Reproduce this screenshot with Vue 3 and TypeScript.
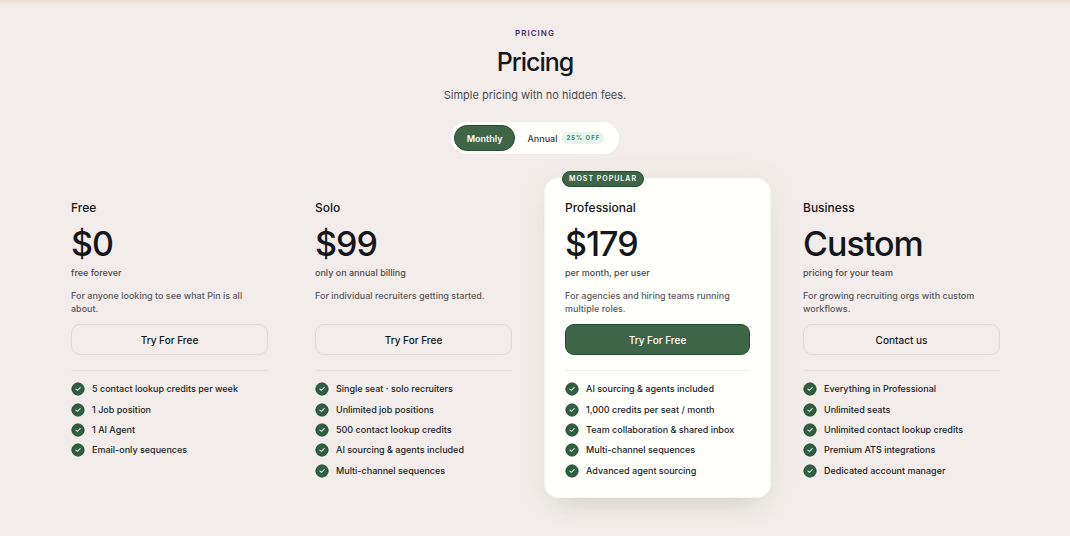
<script setup lang="ts">
import { ref } from 'vue'

interface Plan {
  name: string
  price: string
  note: string
  description: string
  action: string
  features: string[]
  popular?: boolean
}

const billing = ref<'monthly' | 'annual'>('monthly')

const plans: Plan[] = [
  {
    name: 'Free',
    price: '$0',
    note: 'free forever',
    description: 'For anyone looking to see what Pin is all about.',
    action: 'Try For Free',
    features: ['5 contact lookup credits per week', '1 Job position', '1 AI Agent', 'Email-only sequences'],
  },
  {
    name: 'Solo',
    price: '$99',
    note: 'only on annual billing',
    description: 'For individual recruiters getting started.',
    action: 'Try For Free',
    features: [
      'Single seat · solo recruiters',
      'Unlimited job positions',
      '500 contact lookup credits',
      'AI sourcing & agents included',
      'Multi-channel sequences',
    ],
  },
  {
    name: 'Professional',
    price: '$179',
    note: 'per month, per user',
    description: 'For agencies and hiring teams running multiple roles.',
    action: 'Try For Free',
    features: [
      'AI sourcing & agents included',
      '1,000 credits per seat / month',
      'Team collaboration & shared inbox',
      'Multi-channel sequences',
      'Advanced agent sourcing',
    ],
    popular: true,
  },
  {
    name: 'Business',
    price: 'Custom',
    note: 'pricing for your team',
    description: 'For growing recruiting orgs with custom workflows.',
    action: 'Contact us',
    features: [
      'Everything in Professional',
      'Unlimited seats',
      'Unlimited contact lookup credits',
      'Premium ATS integrations',
      'Dedicated account manager',
    ],
  },
]
</script>

<template>
  <main class="page">
    <header class="intro">
      <p class="eyebrow">PRICING</p>
      <h1 class="title">Pricing</h1>
      <p class="subtitle">Simple pricing with no hidden fees.</p>
      <div class="toggle" role="group" aria-label="Billing period">
        <button
          type="button"
          class="option"
          :class="{ active: billing === 'monthly' }"
          :aria-pressed="billing === 'monthly'"
          @click="billing = 'monthly'"
        >
          Monthly
        </button>
        <button
          type="button"
          class="option"
          :class="{ active: billing === 'annual' }"
          :aria-pressed="billing === 'annual'"
          @click="billing = 'annual'"
        >
          Annual <span class="discount">25% OFF</span>
        </button>
      </div>
    </header>

    <section class="plans" aria-label="Plans">
      <article v-for="plan in plans" :key="plan.name" class="plan" :class="{ popular: plan.popular }">
        <span v-if="plan.popular" class="badge">MOST POPULAR</span>
        <h2 class="name">{{ plan.name }}</h2>
        <p class="price">{{ plan.price }}</p>
        <p class="note">{{ plan.note }}</p>
        <p class="description">{{ plan.description }}</p>
        <button type="button" class="action">{{ plan.action }}</button>
        <ul class="features">
          <li v-for="feature in plan.features" :key="feature" class="feature">
            <svg class="check" viewBox="0 0 14 14" aria-hidden="true">
              <circle cx="7" cy="7" r="6.1" fill="#2f5f43" stroke="#1d452d" />
              <path
                d="M4.9 7.1 6.4 8.3 9.2 5.6"
                fill="none"
                stroke="#e9f3e9"
                stroke-width="1.1"
                stroke-linecap="round"
                stroke-linejoin="round"
              />
            </svg>
            <span>{{ feature }}</span>
          </li>
        </ul>
      </article>
    </section>
  </main>
</template>

<style>
body {
  margin: 0;
  background: #f2edea;
}
</style>

<style scoped>
.page {
  box-sizing: border-box;
  min-height: 100vh;
  padding: 26px 47px 38px;
  background: linear-gradient(#ecdfd4, #f2edea 6px);
  color: #14161a;
  font-family: Inter, 'Liberation Sans', sans-serif;
}

h1,
h2,
p,
ul {
  margin: 0;
  padding: 0;
}

button {
  font-family: inherit;
  cursor: pointer;
}

.intro {
  display: flex;
  flex-direction: column;
  align-items: center;
}

.eyebrow {
  color: #4a2a6b;
  font-size: 8px;
  font-weight: 600;
  line-height: 14px;
  letter-spacing: 1px;
}

.title {
  margin-top: 6px;
  font-size: 25px;
  font-weight: 500;
  line-height: 32px;
  letter-spacing: -1px;
}

.subtitle {
  margin-top: 9px;
  color: #4d4c50;
  font-size: 11px;
  line-height: 16px;
}

.toggle {
  display: flex;
  margin-top: 19px;
  padding: 3px;
  border-radius: 16px;
  background: #fffffc;
}

.option {
  display: flex;
  align-items: center;
  gap: 5px;
  height: 26px;
  padding: 0 12px;
  border: 0;
  border-radius: 13px;
  background: transparent;
  color: #3b3b43;
  font-size: 9px;
  font-weight: 500;
}

.option.active {
  border: 1px solid #234c33;
  background: #3f6549;
  color: #fff;
  font-weight: 600;
}

.discount {
  padding: 0 4px;
  border-radius: 6px;
  background: #e4f3ec;
  color: #318a68;
  font-size: 6px;
  font-weight: 700;
  line-height: 12px;
  letter-spacing: 1px;
}

.plans {
  display: grid;
  grid-template-columns: repeat(4, 1fr);
  margin-top: 24px;
}

.plan {
  position: relative;
  display: flex;
  flex-direction: column;
  padding: 21px 23px 17px 24px;
}

.plan.popular {
  margin: 0 8px 0 9px;
  padding: 20px 20px 16px;
  border: 1px solid #f8f6f2;
  border-radius: 14px;
  background: #fffffc;
  box-shadow:
    0 16px 24px -14px rgba(63, 90, 70, 0.18),
    0 4px 32px rgba(120, 110, 60, 0.07);
}

.badge {
  position: absolute;
  top: -8px;
  left: 17px;
  box-sizing: border-box;
  padding: 0 6px;
  border: 1px solid #234c33;
  border-radius: 8px;
  background: #3f6549;
  color: #fff;
  font-size: 7px;
  font-weight: 600;
  line-height: 14px;
  letter-spacing: 1px;
}

.name {
  font-size: 12px;
  font-weight: 500;
  line-height: 18px;
}

.price {
  margin-top: 7px;
  font-size: 34px;
  font-weight: 500;
  line-height: 40px;
  letter-spacing: -1px;
}

.note {
  margin-top: 2px;
  color: #4a494d;
  font-size: 9px;
  font-weight: 500;
  line-height: 14px;
}

.description {
  min-height: 26px;
  margin-top: 9px;
  color: #5a595d;
  font-size: 9px;
  font-weight: 500;
  line-height: 13px;
}

.action {
  height: 31px;
  margin-top: 9px;
  border: 1px solid #dfdad7;
  border-radius: 9px;
  background: transparent;
  color: #14161a;
  font-size: 10px;
  font-weight: 500;
}

.popular .action {
  border-color: #234c33;
  background: #3f6549;
  color: #fff;
}

.features {
  display: grid;
  grid-template-rows: repeat(5, 1fr);
  min-height: 102px;
  margin-top: 15px;
  padding-top: 8px;
  border-top: 1px solid #e5e0dd;
  list-style: none;
}

.popular .features {
  border-color: #efeeea;
}

.feature {
  display: flex;
  align-items: center;
  gap: 7px;
  color: #222327;
  font-size: 9px;
  font-weight: 500;
  line-height: 14px;
}

.check {
  flex: none;
  width: 14px;
  height: 14px;
}

@media (max-width: 800px) {
  .plans {
    grid-template-columns: repeat(2, 1fr);
    row-gap: 24px;
  }
}

@media (max-width: 480px) {
  .plans {
    grid-template-columns: 1fr;
  }
}
</style>
